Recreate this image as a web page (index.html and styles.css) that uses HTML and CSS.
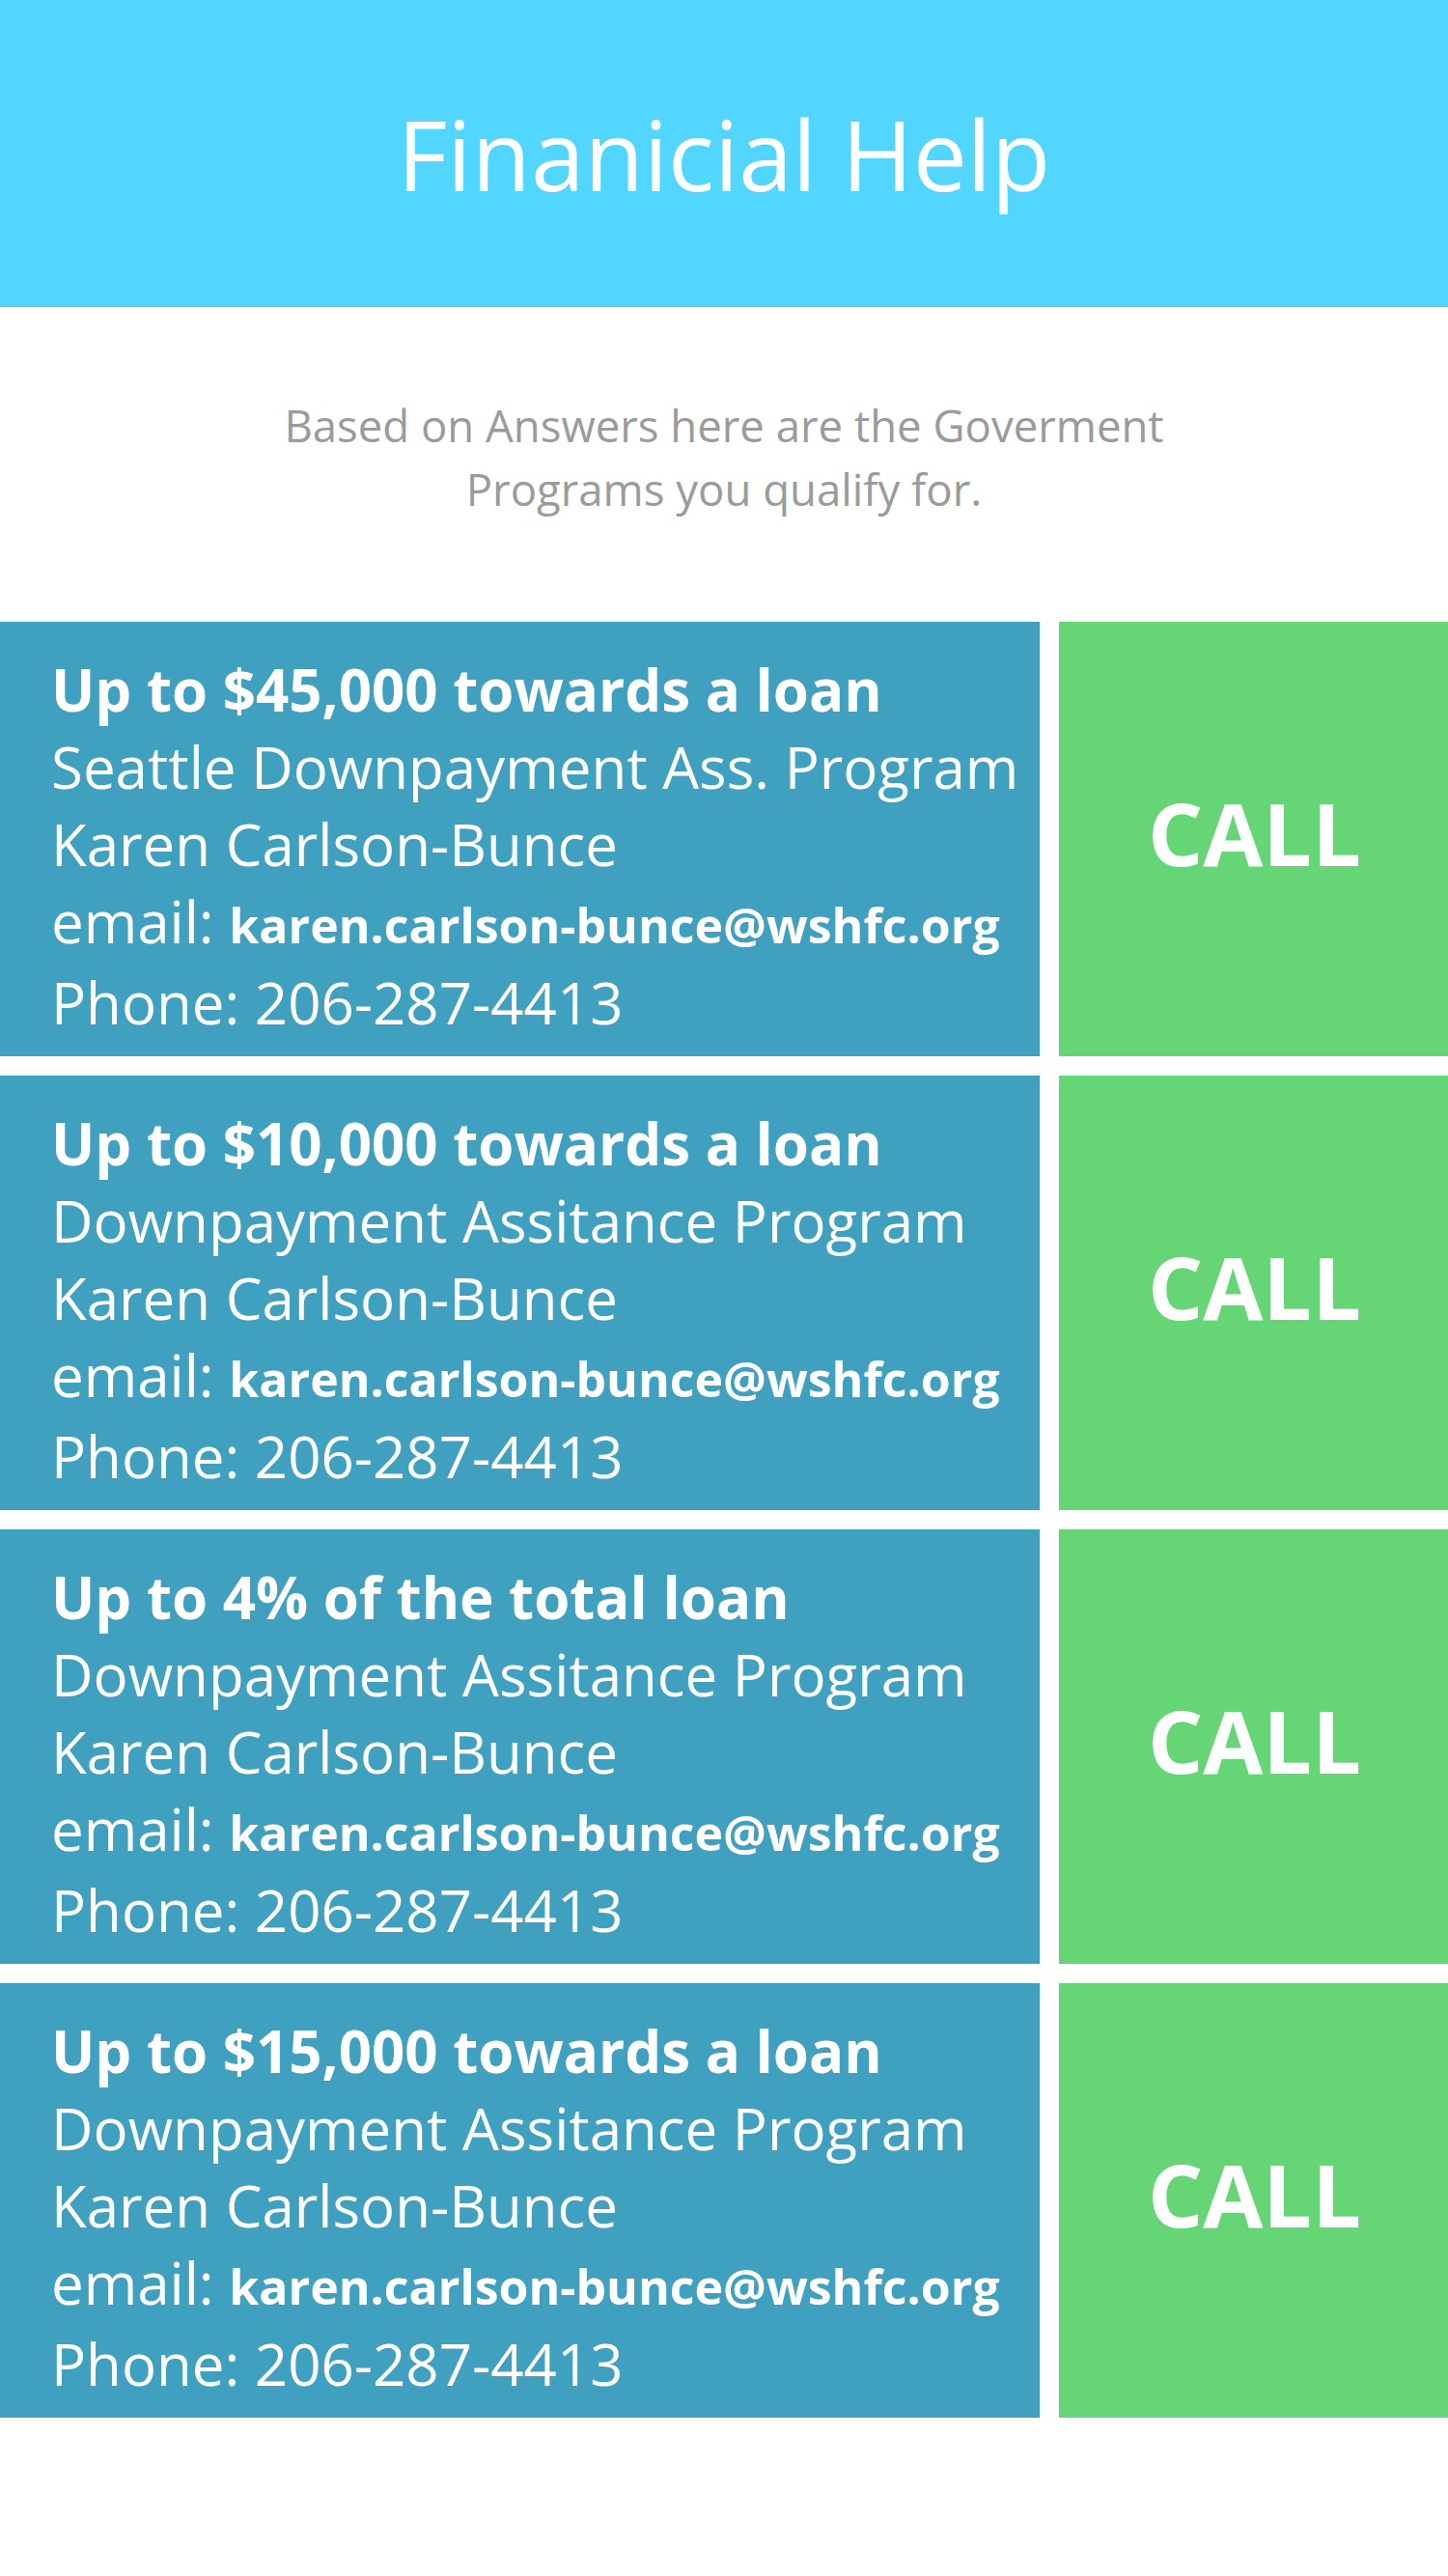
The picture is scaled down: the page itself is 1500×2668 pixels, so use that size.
FILE: index.html
```html
<!DOCTYPE html>
<html lang="en">
<head>
<meta charset="utf-8">
<title>Finanicial Help</title>
<link rel="stylesheet" href="styles.css">
</head>
<body>
  <header class="hero">
    <h1 class="hero-title">Finanicial Help</h1>
  </header>
  <section class="intro">
    <p class="intro-text">Based on Answers here are the Goverment Programs you qualify for.</p>
  </section>
  <main class="programs">
    <article class="program">
      <div class="program-info">
        <div class="program-amount">Up to $45,000 towards a loan</div>
        <div class="program-line">Seattle Downpayment Ass. Program</div>
        <div class="program-line">Karen Carlson-Bunce</div>
        <div class="program-line">email: <span class="program-email">karen.carlson-bunce@wshfc.org</span></div>
        <div class="program-line">Phone: 206-287-4413</div>
      </div>
      <div class="program-call">CALL</div>
    </article>
    <article class="program">
      <div class="program-info">
        <div class="program-amount">Up to $10,000 towards a loan</div>
        <div class="program-line">Downpayment Assitance Program</div>
        <div class="program-line">Karen Carlson-Bunce</div>
        <div class="program-line">email: <span class="program-email">karen.carlson-bunce@wshfc.org</span></div>
        <div class="program-line">Phone: 206-287-4413</div>
      </div>
      <div class="program-call">CALL</div>
    </article>
    <article class="program">
      <div class="program-info">
        <div class="program-amount">Up to 4% of the total loan</div>
        <div class="program-line">Downpayment Assitance Program</div>
        <div class="program-line">Karen Carlson-Bunce</div>
        <div class="program-line">email: <span class="program-email">karen.carlson-bunce@wshfc.org</span></div>
        <div class="program-line">Phone: 206-287-4413</div>
      </div>
      <div class="program-call">CALL</div>
    </article>
    <article class="program">
      <div class="program-info">
        <div class="program-amount">Up to $15,000 towards a loan</div>
        <div class="program-line">Downpayment Assitance Program</div>
        <div class="program-line">Karen Carlson-Bunce</div>
        <div class="program-line">email: <span class="program-email">karen.carlson-bunce@wshfc.org</span></div>
        <div class="program-line">Phone: 206-287-4413</div>
      </div>
      <div class="program-call">CALL</div>
    </article>
  </main>
</body>
</html>
```

FILE: styles.css
```css
* {
  box-sizing: border-box;
}

html, body {
  margin: 0;
  padding: 0;
  background: #ffffff;
}

body {
  font-family: "Open Sans", "Noto Sans", "Liberation Sans", sans-serif;
  color: #ffffff;
}

.hero {
  height: 318px;
  background: #52d6ff;
  display: flex;
  justify-content: center;
  align-items: flex-start;
}

.hero-title {
  margin: 0;
  padding-top: 91px;
  font-size: 100px;
  line-height: 136px;
  font-weight: 400;
  color: #ffffff;
}

.intro {
  padding: 89px 0 105px;
  display: flex;
  justify-content: center;
}

.intro-text {
  margin: 0;
  max-width: 960px;
  text-align: center;
  font-size: 45.5px;
  line-height: 66px;
  color: #9b9b9b;
}

.programs {
  display: flex;
  flex-direction: column;
  gap: 20px;
  padding-bottom: 164px;
}

.program {
  display: grid;
  grid-template-columns: 1077px 1fr;
  column-gap: 20px;
  height: 450px;
}

.program-info {
  background: #3fa0c0;
  padding: 30px 0 0 53px;
  font-size: 60px;
  line-height: 80px;
  white-space: nowrap;
}

.program-amount {
  font-weight: 700;
}

.program-email {
  font-weight: 700;
  font-size: 50px;
}

.program-call {
  background: #66d575;
  display: flex;
  align-items: center;
  justify-content: center;
  font-size: 90px;
  font-weight: 700;
  padding: 0 0 14px 2px;
}
```
